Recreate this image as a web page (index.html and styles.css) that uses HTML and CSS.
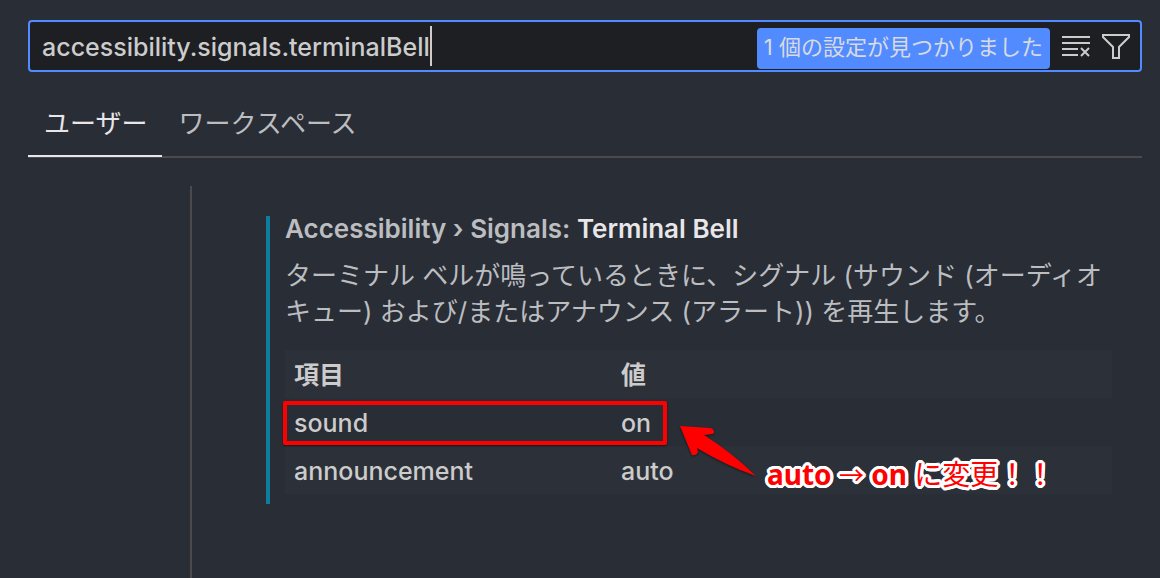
FILE: index.html
```html
<!DOCTYPE html>
<html lang="ja">
<head>
<meta charset="utf-8">
<meta name="viewport" content="width=device-width, initial-scale=1">
<title>設定</title>
<link rel="stylesheet" href="styles.css">
</head>
<body>
<main class="settings">
  <div class="search">
    <label class="search-field">
      <input class="search-input" type="text" aria-label="設定の検索" value="accessibility.signals.terminalBell">
      <span class="caret"></span>
    </label>
    <span class="count">1 個の設定が見つかりました</span>
    <button class="icon-button" type="button" aria-label="検索結果のクリア">
      <svg width="28" height="28" viewBox="0 0 28 28" fill="none" stroke="currentColor" stroke-width="2">
        <path d="M0 5h28M0 11h28M0 17h16M0 23h16"/>
        <path d="M19 16l8 8M27 16l-8 8"/>
      </svg>
    </button>
    <button class="icon-button" type="button" aria-label="フィルター">
      <svg width="28" height="28" viewBox="0 0 28 28" fill="none" stroke="currentColor" stroke-width="2">
        <path d="M1 3h26v2L17 15v11h-6V15L1 5z"/>
      </svg>
    </button>
  </div>

  <nav class="tabs">
    <button class="tab tab-active" type="button">ユーザー</button>
    <button class="tab" type="button">ワークスペース</button>
  </nav>

  <div class="body">
    <aside class="toc"></aside>
    <section class="content">
      <article class="setting">
        <h2 class="title"><span class="category">Accessibility › Signals: </span>Terminal Bell</h2>
        <p class="description">ターミナル ベルが鳴っているときに、シグナル (サウンド (オーディオ キュー) および/またはアナウンス (アラート)) を再生します。</p>
        <div class="table-wrap">
          <table class="values">
            <thead><tr><th class="key">項目</th><th>値</th></tr></thead>
            <tbody>
              <tr><td>sound</td><td>on</td></tr>
              <tr><td>announcement</td><td>auto</td></tr>
            </tbody>
          </table>
          <div class="highlight"></div>
          <svg class="arrow" width="80" height="54" viewBox="0 0 80 54">
            <path d="M1 1L32 3Q37 6 34 9L25 10Q52 27 77 51Q46 40 18 23L19 27Q17 31 13 30Z" fill="#ff0000"/>
          </svg>
          <div class="note"><b>auto</b> <span class="note-arrow">→</span> <b>on</b> に変更！！</div>
        </div>
      </article>
    </section>
  </div>
</main>
</body>
</html>
```

FILE: styles.css
```css
* {
  box-sizing: border-box;
}

body {
  margin: 0;
  background: #292d35;
  color: #cccccc;
  font-family: Inter, "Noto Sans CJK JP", sans-serif;
  font-size: 26px;
}

button {
  border: 0;
  background: none;
  font: inherit;
  color: inherit;
}

.settings {
  display: flex;
  flex-direction: column;
  min-height: 100vh;
  padding: 20px 18px 0 28px;
}

.search {
  display: flex;
  align-items: center;
  height: 52px;
  padding: 0 10px 0 12px;
  border: 2px solid #528bff;
  border-radius: 4px;
  background: #1d1f23;
}

.search-field {
  display: flex;
  flex: 1;
  align-items: center;
  min-width: 0;
}

.search-input {
  field-sizing: content;
  min-width: 0;
  padding: 2px 0 0;
  border: 0;
  outline: 0;
  background: none;
  color: #cccccc;
  font: inherit;
  font-size: 25px;
  font-weight: 500;
}

.caret {
  width: 2px;
  height: 40px;
  background: #cccccc;
}

.count {
  height: 41px;
  margin: 4px 12px 0 0;
  padding: 0 7px;
  border-radius: 4px;
  background: #528bff;
  color: #d7dae0;
  font-size: 22px;
  line-height: 39px;
  white-space: nowrap;
}

.icon-button {
  display: flex;
  padding: 0;
}

.icon-button + .icon-button {
  margin-left: 12px;
}

.tabs {
  display: flex;
  height: 66px;
  margin-top: 20px;
  border-bottom: 2px solid #4b4b4d;
}

.tab {
  height: 65px;
  padding: 0 15px 4px 16px;
  border-bottom: 2px solid transparent;
  color: #bbbdc0;
}

.tab-active {
  border-bottom-color: #e8e6e8;
  color: #e8e6e8;
}

.body {
  display: flex;
  flex: 1;
  margin-top: 28px;
}

.toc {
  flex: 0 0 164px;
  border-right: 2px solid #4b4b4d;
}

.content {
  flex: 1;
  padding: 30px 30px 30px 74px;
}

.setting {
  padding: 0 0 10px 15px;
  border-left: 4px solid #0c7d9d;
}

.title {
  margin: 0;
  color: #e8e6e8;
  font-size: 26px;
  font-weight: 600;
  line-height: 26px;
}

.category {
  color: #bbbdc0;
}

.description {
  margin: 16px 0 20px;
  color: #bbbdc0;
  line-height: 36px;
}

.table-wrap {
  position: relative;
}

.values {
  width: 100%;
  border-collapse: collapse;
  table-layout: fixed;
  font-size: 25px;
  font-weight: 500;
  line-height: 36px;
}

.values th,
.values td {
  height: 48px;
  padding: 7px 9px 5px;
  text-align: left;
}

.values th {
  font-weight: 700;
}

.values .key {
  width: 327px;
}

.values tr {
  background: #2c3038;
}

.values tbody tr:nth-child(odd) {
  background: none;
}

.highlight {
  position: absolute;
  top: 51px;
  left: -2px;
  width: 384px;
  height: 44px;
  border: 4px solid #ff0000;
  border-radius: 2px;
  box-shadow: 0 1px 2px #00000080;
}

.arrow {
  position: absolute;
  top: 75px;
  left: 394px;
  filter: drop-shadow(0 1px 1px #00000080);
}

.note {
  position: absolute;
  top: 104px;
  left: 482px;
  color: #ff0000;
  font-family: "Noto Sans", "Noto Sans CJK JP", sans-serif;
  font-size: 28px;
  line-height: 40px;
  white-space: nowrap;
  text-shadow:
    3px 0 #ffffff, -3px 0 #ffffff, 0 3px #ffffff, 0 -3px #ffffff,
    2px 2px #ffffff, -2px 2px #ffffff, 2px -2px #ffffff, -2px -2px #ffffff,
    3px 1px #ffffff, -3px 1px #ffffff, 3px -1px #ffffff, -3px -1px #ffffff,
    1px 3px #ffffff, -1px 3px #ffffff, 1px -3px #ffffff, -1px -3px #ffffff,
    1px 1px #ffffff, -1px 1px #ffffff, 1px -1px #ffffff, -1px -1px #ffffff;
}

.note-arrow {
  font-size: 25px;
}
```
